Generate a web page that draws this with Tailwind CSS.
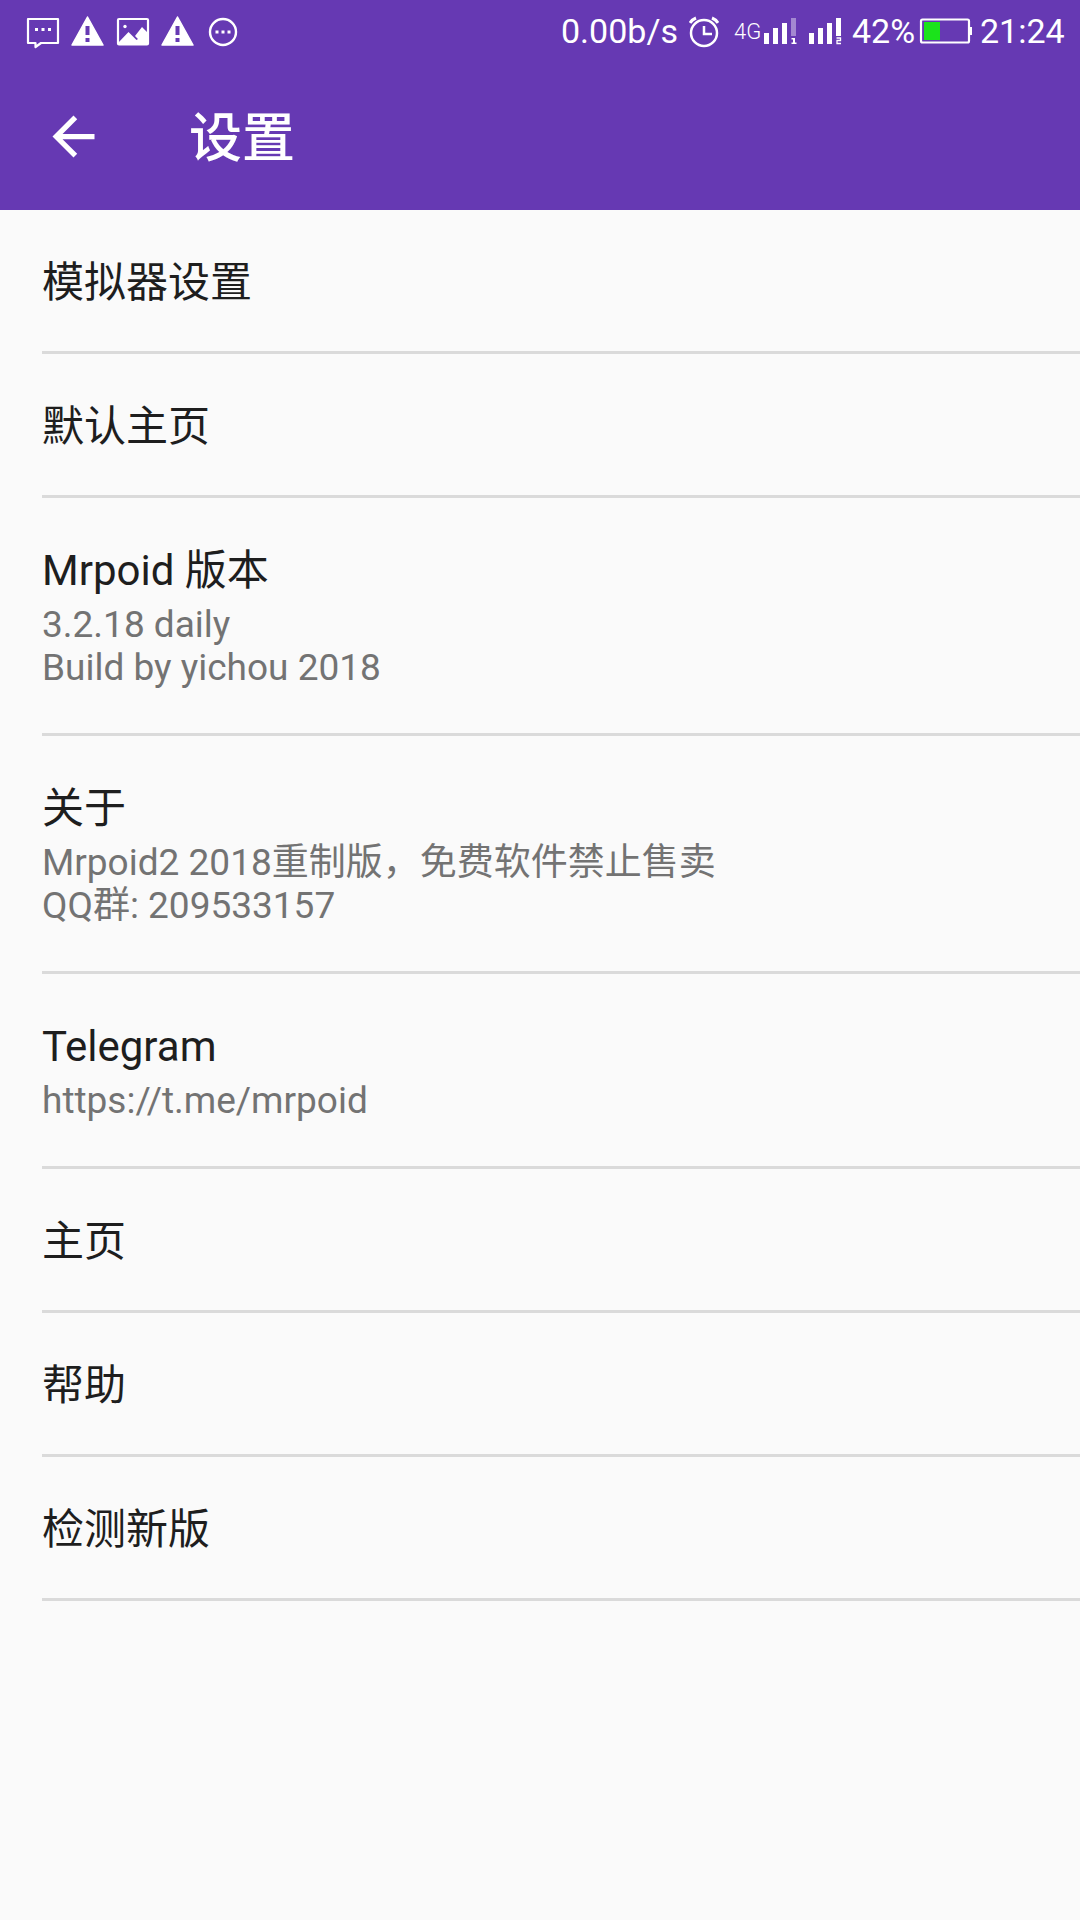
<!DOCTYPE html>
<html lang="zh-CN">
<head>
    <meta charset="UTF-8" />
    <meta name="viewport" content="width=device-width, initial-scale=1.0" />
    <title>设置</title>
    <script src="https://cdn.jsdelivr.net/npm/@tailwindcss/browser@4"></script>
</head>
<body class="bg-[#fafafa] font-[Roboto,'Noto_Sans_CJK_SC',sans-serif]">
    <div class="h-[1920px] w-[1080px] overflow-hidden">
        <header class="h-[210px] bg-[#6639b3] text-white">
            <!-- Status bar -->
            <div class="flex h-[63px] items-center text-[34px] leading-[63px]">
                <svg class="h-[63px] w-[260px] shrink-0" viewBox="0 0 260 63" fill="none">
                    <path d="M28 19h30v24H41l-5.500 4v-4H28z" stroke="#fff" stroke-width="2.200" stroke-linejoin="round"/>
                    <path d="M35 28h3v3h-3zM41.500 28h3v3h-3zM48 28h3v3h-3z" fill="#fff"/>
                    <path fill-rule="evenodd" d="M87.500 17l15.500 28H72zM85.500 26v9h4v-9zM85.500 38v4h4v-4z" fill="#fff"/>
                    <path d="M87.500 17l15.500 28H72z" stroke="#fff" stroke-width="1.500" stroke-linejoin="round"/>
                    <rect x="118" y="19" width="30" height="25.500" rx="1" stroke="#fff" stroke-width="2.200"/>
                    <circle cx="125" cy="26.500" r="1.700" fill="#fff"/>
                    <path d="M118 43l10.500-11 8 8 1.500-1-3-3 7-9 6 6v12h-30z" fill="#fff"/>
                    <path fill-rule="evenodd" d="M177.500 17l15.500 28h-31zM175.500 26v9h4v-9zM175.500 38v4h4v-4z" fill="#fff"/>
                    <path d="M177.500 17l15.500 28h-31z" stroke="#fff" stroke-width="1.500" stroke-linejoin="round"/>
                    <circle cx="223" cy="32" r="13" stroke="#fff" stroke-width="2.400"/>
                    <path d="M215.500 30.500h3v3h-3zM221.500 30.500h3v3h-3zM227.500 30.500h3v3h-3z" fill="#fff"/>
                </svg>
                <span class="ml-[301px] w-[116px] whitespace-nowrap">0.00b/s</span>
                <svg class="ml-3 h-[63px] w-[30px] shrink-0" viewBox="689 0 30 63" fill="none" stroke="#fff">
                    <circle cx="704" cy="33" r="13" stroke-width="2.500"/>
                    <path d="M704 26v8h8" stroke-width="2.500"/>
                    <path d="M690 23a13 13 0 0 1 6-5M718 23a13 13 0 0 0-6-5" stroke-width="3"/>
                </svg>
                <span class="ml-[15px] w-[28px] text-[22px] font-light whitespace-nowrap">4G</span>
                <svg class="h-[63px] w-[82px] shrink-0" viewBox="762 0 82 63" fill="#fff">
                    <path d="M764 33h5v11h-5zM773 28h5v16h-5zM782 23h5v21h-5z"/>
                    <path d="M791 18h5v18h-5z" fill-opacity=".4"/>
                    <path d="M791.500 38h3.500v4.500h1.500v1.500h-5v-1.500h1.500v-3h-1.500z"/>
                    <path d="M809 33h5v11h-5zM818 28h5v16h-5zM827 23h5v21h-5zM836 18h5v18h-5z"/>
                    <path d="M836.500 38h4v2.500h-3.500v3h4" fill="none" stroke="#fff" stroke-width="1.300"/>
                </svg>
                <span class="ml-2 w-[66px] whitespace-nowrap">42%</span>
                <svg class="h-[63px] w-[54px] shrink-0" viewBox="918 0 54 63" fill="none">
                    <rect x="921" y="19.500" width="48" height="23" rx="1.500" stroke="#fff" stroke-width="2.200"/>
                    <path d="M970 27h2v8h-2z" fill="#fff"/>
                    <path d="M924 22h16v18h-16z" fill="#1be31b"/>
                </svg>
                <span class="ml-2 whitespace-nowrap">21:24</span>
            </div>
            <!-- App bar -->
            <div class="flex h-[147px] items-center pl-[42px]">
                <svg class="size-[63px]" viewBox="0 0 24 24" fill="#fff"><path d="M20 11H7.830l5.590-5.590L12 4l-8 8 8 8 1.410-1.410L7.830 13H20v-2z"/></svg>
                <h1 class="ml-[84px] pt-1.5 text-[53px] font-medium">设置</h1>
            </div>
        </header>

        <!-- Preferences -->
        <main class="ml-[42px] text-[42px] leading-[57px] text-[#1e1e1e]">
            <div class="border-b-3 border-[#dadada] pt-11 pb-10">模拟器设置</div>
            <div class="border-b-3 border-[#dadada] pt-11 pb-10">默认主页</div>
            <div class="border-b-3 border-[#dadada] py-11">
                <h2>Mrpoid 版本</h2>
                <p class="mt-1 text-[37px] leading-[43px] text-[#737373]">3.2.18 daily<br>Build by yichou 2018</p>
            </div>
            <div class="border-b-3 border-[#dadada] py-11">
                <h2>关于</h2>
                <p class="mt-1 text-[37px] leading-[43px] text-[#737373]">Mrpoid2 2018重制版，免费软件禁止售卖<br>QQ群: 209533157</p>
            </div>
            <div class="border-b-3 border-[#dadada] py-11">
                <h2>Telegram</h2>
                <p class="mt-1 text-[37px] leading-[43px] text-[#737373]">https://t.me/mrpoid</p>
            </div>
            <div class="border-b-3 border-[#dadada] pt-11 pb-10">主页</div>
            <div class="border-b-3 border-[#dadada] pt-11 pb-10">帮助</div>
            <div class="border-b-3 border-[#dadada] pt-11 pb-10">检测新版</div>
        </main>
    </div>
</body>
</html>
